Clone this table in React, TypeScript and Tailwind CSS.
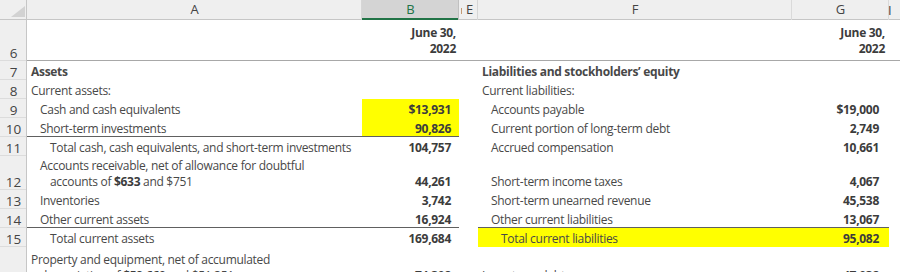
import React from "react";

const GRID = "grid grid-cols-[27px_335px_97px_19px_314px_97px_11px]";
const TXT = "flex items-end overflow-hidden whitespace-nowrap leading-[16px] pb-0 text-[12px] tracking-[-0.3px]";
const RH =
  "flex items-end justify-center bg-[#efefef] text-[13.5px] leading-[16px] pb-0 text-[#444] shadow-[inset_-1px_0_0_#c6c6c6,inset_0_-1px_0_#dcdcdc]";
const NUM = "justify-end pr-[8px] font-bold text-[#3c3c3c]";
const NUMG = "justify-end pr-[10px] font-bold text-[#3c3c3c]";

function Row({
  h,
  n,
  a,
  b,
  f,
  g,
  aCls = "",
  bCls = "",
  fCls = "",
  gCls = "",
  eCls = "",
}: {
  h: string;
  n: string;
  a?: React.ReactNode;
  b?: React.ReactNode;
  f?: React.ReactNode;
  g?: React.ReactNode;
  aCls?: string;
  bCls?: string;
  fCls?: string;
  gCls?: string;
  eCls?: string;
}) {
  return (
    <div className={`${GRID} ${h}`}>
      <div className={RH}>{n}</div>
      <div className={`${TXT} text-[#484848] ${aCls}`}>{a}</div>
      <div className={`${TXT} ${NUM} ${bCls}`}>{b}</div>
      <div className={`${TXT} ${eCls}`}></div>
      <div className={`${TXT} text-[#484848] ${fCls}`}>{f}</div>
      <div className={`${TXT} ${NUMG} ${gCls}`}>{g}</div>
      <div className={TXT}></div>
    </div>
  );
}

export default function App() {
  return (
    <div className="w-[900px] h-[272px] overflow-hidden bg-white font-['Open_Sans',sans-serif]">
      {/* Column header row */}
      <div className={`${GRID} h-[20px] bg-[#efefef] text-[13px] text-[#444]`}>
        <div className="flex items-end justify-end shadow-[inset_-1px_0_0_#c6c6c6,inset_0_-1px_0_#c6c6c6]">
          <svg width="27" height="20" viewBox="0 0 27 20">
            <polygon points="11,17 25,17 25,6" fill="#d2d2d2" />
          </svg>
        </div>
        <div className="flex items-center justify-center shadow-[inset_-1px_0_0_#d6d6d6,inset_0_-1px_0_#c6c6c6]">A</div>
        <div className="flex items-center justify-center bg-[#d4d4d4] text-[#217346] shadow-[inset_-1px_0_0_#c0c0c0,inset_0_-2px_0_#217346]">
          B
        </div>
        <div className="flex items-center shadow-[inset_-1px_0_0_#d6d6d6,inset_0_-1px_0_#c6c6c6]">
          <div className="ml-[2px] mt-[1px] h-[6px] w-[1px] bg-[#c49a74]" />
          <div className="flex-1 text-center pr-[1px]">E</div>
        </div>
        <div className="flex items-center justify-center shadow-[inset_-1px_0_0_#dadada,inset_0_-1px_0_#c6c6c6]">F</div>
        <div className="flex items-center justify-center shadow-[inset_-1px_0_0_#dadada,inset_0_-1px_0_#c6c6c6]">G</div>
        <div className="flex items-center shadow-[inset_0_-1px_0_#c6c6c6]">
          <span className="ml-[-1px] leading-[16px]">I</span>
        </div>
      </div>

      {/* Row 6 (freeze line at bottom) */}
      <div className={`${GRID} h-[41px]`}>
        <div className={`${RH} shadow-[inset_-1px_0_0_#c6c6c6,inset_0_-1px_0_#a8a8a8]`}>6</div>
        <div className="shadow-[inset_0_-1px_0_#a8a8a8]" />
        <div className="flex flex-col items-end justify-end pb-[4px] pr-[3px] text-[12px] tracking-[-0.3px] leading-[16px] font-bold text-[#3c3c3c] shadow-[inset_0_-1px_0_#a8a8a8]">
          <span>June 30,</span>
          <span>2022</span>
        </div>
        <div className="shadow-[inset_0_-1px_0_#a8a8a8]" />
        <div className="shadow-[inset_0_-1px_0_#a8a8a8]" />
        <div className="flex flex-col items-end justify-end pb-[4px] pr-[4px] text-[12px] tracking-[-0.3px] leading-[16px] font-bold text-[#3c3c3c] shadow-[inset_0_-1px_0_#a8a8a8]">
          <span>June 30,</span>
          <span>2022</span>
        </div>
        <div className="shadow-[inset_0_-1px_0_#a8a8a8]" />
      </div>

      <Row
        h="h-[19px]"
        n="7"
        a="Assets"
        aCls="pl-[4px] font-bold text-[#3c3c3c]"
        f="Liabilities and stockholders’ equity"
        fCls="pl-[4px] font-bold text-[#3c3c3c]"
      />
      <Row h="h-[19px]" n="8" a="Current assets:" aCls="pl-[4px]" f="Current liabilities:" fCls="pl-[4px]" />
      <Row
        h="h-[19px]"
        n="9"
        a="Cash and cash equivalents"
        aCls="pl-[13px]"
        b="$13,931"
        bCls="bg-[#ffff00]"
        f="Accounts payable"
        fCls="pl-[13px]"
        g="$19,000"
      />
      <Row
        h="h-[19px]"
        n="10"
        a="Short-term investments"
        aCls="pl-[13px] shadow-[inset_0_-1px_0_#606060]"
        b="90,826"
        bCls="bg-[#ffff00] shadow-[inset_0_-1px_0_#606060]"
        f="Current portion of long-term debt"
        fCls="pl-[13px]"
        g="2,749"
      />
      <Row
        h="h-[19px]"
        n="11"
        a="Total cash, cash equivalents, and short-term investments"
        aCls="pl-[23px]"
        b="104,757"
        f="Accrued compensation"
        fCls="pl-[13px]"
        g="10,661"
      />
      <Row
        h="h-[34px]"
        n="12"
        a={
          <div className="flex flex-col">
            <span className="pl-[13px]">Accounts receivable, net of allowance for doubtful</span>
            <span className="pl-[23px]">
              accounts of <b className="text-[#3c3c3c]">$633</b> and $751
            </span>
          </div>
        }
        b="44,261"
        f="Short-term income taxes"
        fCls="pl-[13px]"
        g="4,067"
      />
      <Row h="h-[19px]" n="13" a="Inventories" aCls="pl-[13px]" b="3,742" f="Short-term unearned revenue" fCls="pl-[13px]" g="45,538" />
      <Row
        h="h-[19px]"
        n="14"
        a="Other current assets"
        aCls="pl-[13px] shadow-[inset_0_-1px_0_#606060]"
        b="16,924"
        bCls="shadow-[inset_0_-1px_0_#606060]"
        eCls="shadow-[inset_3px_-1px_0_#ffffff]"
        f="Other current liabilities"
        fCls="pl-[13px] shadow-[inset_0_-1px_0_#606060]"
        g="13,067"
        gCls="shadow-[inset_0_-1px_0_#606060]"
      />
      <Row
        h="h-[19px]"
        n="15"
        a="Total current assets"
        aCls="pl-[23px]"
        b="169,684"
        f="Total current liabilities"
        fCls="pl-[23px] bg-[#ffff00]"
        g="95,082"
        gCls="bg-[#ffff00]"
      />
      <Row
        h="h-[37px]"
        n="16"
        a={
          <div className="flex flex-col">
            <span className="pl-[4px]">Property and equipment, net of accumulated</span>
            <span className="pl-[13px]">
              depreciation of <b className="text-[#3c3c3c]">$59,660</b> and $51,351
            </span>
          </div>
        }
        b="74,308"
        f="Long-term debt"
        fCls="pl-[4px]"
        g="47,032"
      />
    </div>
  );
}
